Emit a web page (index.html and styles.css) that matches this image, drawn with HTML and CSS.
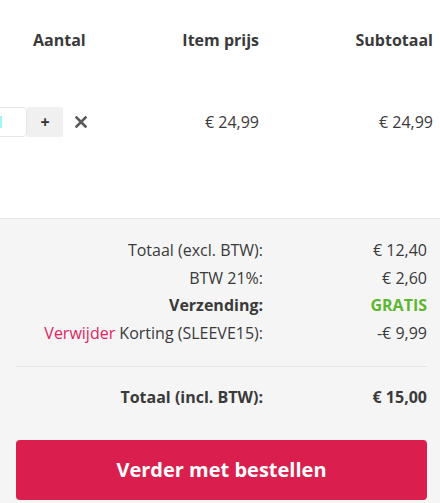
FILE: index.html
```html
<!DOCTYPE html>
<html lang="nl">
<head>
<meta charset="utf-8">
<title>Winkelwagen</title>
<link rel="stylesheet" href="styles.css">
</head>
<body>
<div class="cart">
  <div class="cart-row cart-head">
    <div class="cell cell-qty">Aantal</div>
    <div class="cell cell-price">Item prijs</div>
    <div class="cell cell-sub">Subtotaal</div>
  </div>
  <div class="cart-row cart-item">
    <div class="cell cell-qty">
      <div class="qty">
        <div class="qty-input"><span class="caret"></span></div>
        <button class="qty-plus" type="button">+</button>
      </div>
      <button class="remove" type="button" aria-label="Verwijder">
        <svg width="12" height="12" viewBox="0 0 12 12"><path d="M1.5 1.5 L10.5 10.5 M10.5 1.5 L1.5 10.5" stroke="#5a5a5a" stroke-width="2.6" stroke-linecap="square" fill="none"/></svg>
      </button>
    </div>
    <div class="cell cell-price">€ 24,99</div>
    <div class="cell cell-sub">€ 24,99</div>
  </div>
</div>
<div class="summary">
  <div class="sum-grid">
    <div class="sum-label">Totaal (excl. BTW):</div>
    <div class="sum-value">€ 12,40</div>
    <div class="sum-label">BTW 21%:</div>
    <div class="sum-value">€ 2,60</div>
    <div class="sum-label bold">Verzending:</div>
    <div class="sum-value bold free">GRATIS</div>
    <div class="sum-label"><a class="remove-link" href="#">Verwijder</a> Korting (SLEEVE15):</div>
    <div class="sum-value">-€ 9,99</div>
  </div>
  <div class="sum-grid sum-total">
    <div class="sum-label bold">Totaal (incl. BTW):</div>
    <div class="sum-value bold">€ 15,00</div>
  </div>
  <button class="checkout" type="button">Verder met bestellen</button>
</div>
</body>
</html>
```
FILE: styles.css
```css
html, body {
  margin: 0;
  padding: 0;
  background: #fff;
}
body {
  font-family: "Open Sans", "Liberation Sans", sans-serif;
  color: #3a3a3a;
  width: 440px;
  overflow: hidden;
}
.cart-row {
  display: grid;
  grid-template-columns: 120px 139px 174px;
  align-items: center;
}
.cell-price, .cell-sub {
  text-align: right;
}
.cart-head {
  height: 80px;
  font-weight: 700;
  font-size: 16px;
}
.cart-head .cell-qty {
  padding-left: 33px;
}
.cart-item {
  height: 138px;
  align-items: start;
  padding-top: 27px;
  box-sizing: border-box;
  font-size: 16px;
}
.cart-item .cell-price, .cart-item .cell-sub {
  line-height: 30px;
}
.cell-qty {
  display: flex;
  align-items: center;
}
.qty {
  display: flex;
  height: 30px;
}
.qty-input {
  width: 40px;
  margin-left: -13px;
  box-sizing: border-box;
  border: 1px solid #e6e6e6;
  border-radius: 4px;
  background: #fff;
  display: flex;
  align-items: center;
  padding-left: 12px;
}
.caret {
  display: block;
  width: 2px;
  height: 12px;
  background: #9ff7f7;
}
.qty-plus {
  width: 36px;
  height: 30px;
  border: 0;
  padding: 0;
  background: #f0f0f0;
  font-family: inherit;
  font-weight: 700;
  font-size: 16px;
  color: #333;
  cursor: pointer;
}
.remove {
  margin-left: 12px;
  border: 0;
  padding: 0;
  background: none;
  display: flex;
  cursor: pointer;
}
.summary {
  background: #f5f5f5;
  border-top: 1px solid #e6e6e6;
  padding: 18px 13px 3px 16px;
}
.sum-grid {
  display: grid;
  grid-template-columns: 1fr 164px;
  font-size: 16px;
  line-height: 27.5px;
  text-align: right;
}
.bold {
  font-weight: 700;
}
.free {
  color: #5db531;
}
.remove-link {
  color: #e0245e;
  text-decoration: none;
}
.sum-total {
  margin-top: 19px;
  border-top: 1px solid #e4e4e4;
  padding-top: 17px;
}
.checkout {
  display: block;
  margin-top: 28px;
  width: 411px;
  height: 60px;
  border: 0;
  border-radius: 4px;
  background: #da1f4e;
  color: #fff;
  font-family: inherit;
  font-weight: 700;
  font-size: 20px;
  cursor: pointer;
}
```
